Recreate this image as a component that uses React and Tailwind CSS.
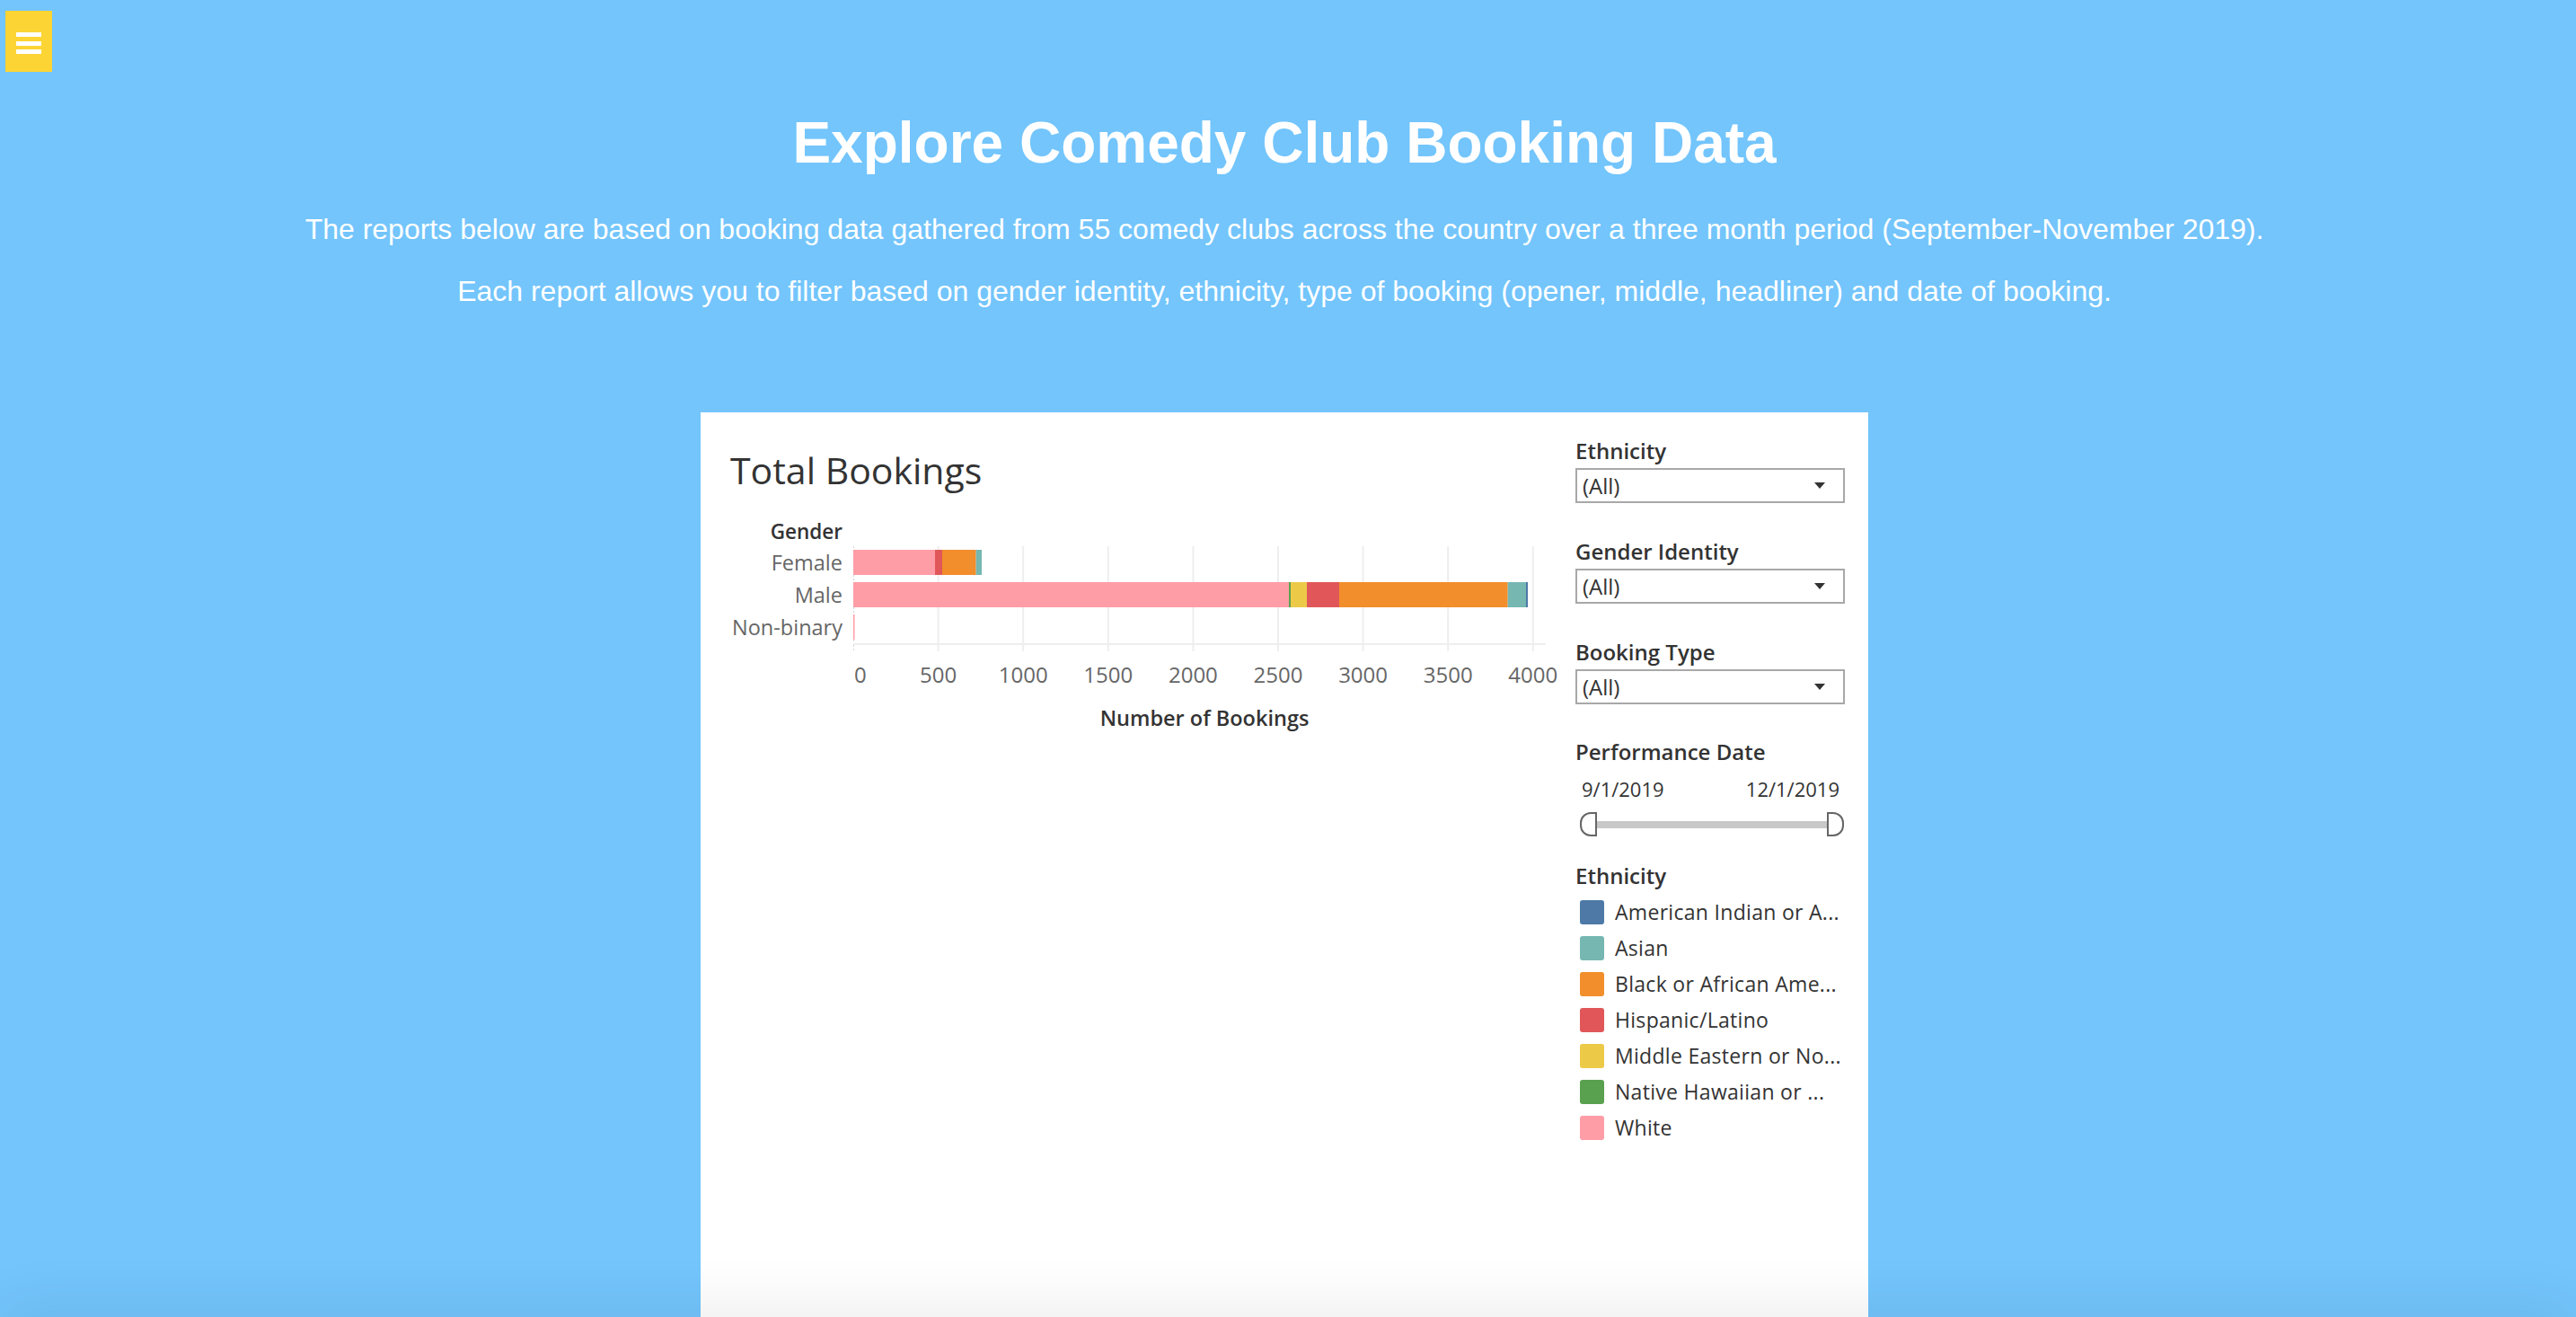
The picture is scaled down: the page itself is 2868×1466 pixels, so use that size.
import React from 'react';

const STEP = 94.6;

const bars = [
  {
    label: 'Female',
    segs: [
      [91, '#ff9da7'],
      [8, '#e15759'],
      [37.7, '#f28e2b'],
      [6.3, '#76b7b2'],
    ],
  },
  {
    label: 'Male',
    segs: [
      [485, '#ff9da7'],
      [2, '#59a14f'],
      [18, '#edc948'],
      [36, '#e15759'],
      [187.7, '#f28e2b'],
      [20.3, '#76b7b2'],
      [2, '#4e79a7'],
    ],
  },
  {
    label: 'Non-binary',
    segs: [[1.5, '#ff9da7']],
  },
];

const legend = [
  ['American Indian or A...', '#4e79a7'],
  ['Asian', '#76b7b2'],
  ['Black or African Ame...', '#f28e2b'],
  ['Hispanic/Latino', '#e15759'],
  ['Middle Eastern or No...', '#edc948'],
  ['Native Hawaiian or ...', '#59a14f'],
  ['White', '#ff9da7'],
];

const Filter = ({ label, first }) => (
  <div className={first ? '' : 'mt-[42px]'}>
    <p className="text-[24px] leading-[24px] font-semibold text-[#333]">{label}</p>
    <div className="mt-[7px] h-[39px] w-[300px] border-2 border-[#a8a8a8] flex items-center justify-between pl-[6px] pr-[20px]">
      <span className="text-[24px] leading-[24px] text-[#333]">(All)</span>
      <span className="w-0 h-0 border-l-[6px] border-r-[6px] border-t-[7px] border-l-transparent border-r-transparent border-t-[#333]" />
    </div>
  </div>
);

const Chart = () => {
  let rows = bars.map((b, i) => {
    let x = 0;
    return (
      <g key={b.label}>
        {b.segs.map(([w, c], j) => {
          const r = <rect key={j} x={x} y={4 + 36 * i} width={w} height={28} fill={c} />;
          x += w;
          return r;
        })}
      </g>
    );
  });

  return (
    <svg width="781" height="212" className="overflow-visible font-['Open_Sans']">
      {[1, 2, 3, 4, 5, 6, 7, 8].map((k) => (
        <line key={k} x1={STEP * k} x2={STEP * k} y1={0} y2={117} stroke="#eeeeee" strokeWidth="2" />
      ))}
      <line x1={0} x2={771} y1={109} y2={109} stroke="#eeeeee" strokeWidth="2" />
      <line x1={0.5} x2={0.5} y1={0} y2={108} stroke="#d4d4d4" strokeWidth="1" strokeDasharray="2 2" />
      <line x1={0.5} x2={0.5} y1={110} y2={117} stroke="#d4d4d4" strokeWidth="1" strokeDasharray="2 2" />
      {rows}
      {[0, 500, 1000, 1500, 2000, 2500, 3000, 3500, 4000].map((v, k) => (
        <text
          key={v}
          x={k === 0 ? 1 : STEP * k}
          y={151.5}
          textAnchor={k === 0 ? 'start' : 'middle'}
          fontSize="24"
          fill="#666"
        >
          {v}
        </text>
      ))}
      <text x={391} y={200} textAnchor="middle" fontSize="23.5" fontWeight="600" fill="#333">
        Number of Bookings
      </text>
    </svg>
  );
};

export default function App() {
  return (
    <div className="relative h-screen overflow-hidden bg-[#73c5fc] font-['Liberation_Sans',Arial,sans-serif]">
      <button className="absolute left-[6px] top-[12px] z-10 w-[52px] h-[68px] bg-[#fcd434] flex flex-col items-center pt-[24px] gap-[4.5px]">
        <span className="block w-[28px] h-[5px] bg-white" />
        <span className="block w-[28px] h-[5px] bg-white" />
        <span className="block w-[28px] h-[5px] bg-white" />
      </button>

      <div className="flex flex-col items-center pr-[8px] text-white">
        <h1 className="mt-[127px] text-[64px] leading-[64px] font-bold">Explore Comedy Club Booking Data</h1>
        <p className="mt-[48px] text-[32px] leading-[32px]">
          The reports below are based on booking data gathered from 55 comedy clubs across the country over a three month period (September-November 2019).
        </p>
        <p className="mt-[37px] text-[32px] leading-[32px]">
          Each report allows you to filter based on gender identity, ethnicity, type of booking (opener, middle, headliner) and date of booking.
        </p>

        <div className="mt-[119px] w-[1300px] h-[1100px] bg-white flex font-['Open_Sans',sans-serif]">
          <div className="w-[974px] pl-[33px]">
            <h2 className="mt-[44px] text-[41px] leading-[41px] text-[#333]">Total Bookings</h2>
            <div className="mt-[37px] flex">
              <div className="w-[125px] flex flex-col items-end">
                <p className="text-[22.5px] leading-[22px] font-semibold text-[#333]">Gender</p>
                <div className="mt-[5px] flex flex-col items-end">
                  {bars.map((b) => (
                    <div
                      key={b.label}
                      className="h-[36px] flex items-center whitespace-nowrap text-[23.5px] leading-[24px] text-[#666]"
                    >
                      {b.label}
                    </div>
                  ))}
                </div>
              </div>
              <div className="ml-[12px] pt-[27px]">
                <Chart />
              </div>
            </div>
          </div>

          <div className="w-[300px] pt-[31px] text-[#333]">
            <Filter label="Ethnicity" first />
            <Filter label="Gender Identity" />
            <Filter label="Booking Type" />

            <p className="mt-[41px] text-[24px] leading-[24px] font-semibold">Performance Date</p>
            <div className="mt-[18px] flex justify-between pl-[7px] pr-[6px] text-[22px] leading-[22px]">
              <span>9/1/2019</span>
              <span>12/1/2019</span>
            </div>
            <div className="mt-[15px] pl-[5px] pr-[1px] flex items-center">
              <span className="block w-[19px] h-[27px] border-2 border-[#666] rounded-l-[12px] bg-white" />
              <span className="block flex-1 h-[8px] bg-[#c8c8c8]" />
              <span className="block w-[19px] h-[27px] border-2 border-[#666] rounded-r-[12px] bg-white" />
            </div>

            <p className="mt-[32px] text-[24px] leading-[24px] font-semibold">Ethnicity</p>
            <div className="mt-[8px] pl-[5px]">
              {legend.map(([name, color]) => (
                <div key={name} className="h-[40px] flex items-center gap-[12px]">
                  <span className="block w-[27px] h-[27px] rounded-[3px]" style={{ backgroundColor: color }} />
                  <span className="text-[23px] leading-[23px] tracking-[0.3px] whitespace-nowrap">{name}</span>
                </div>
              ))}
            </div>
          </div>
        </div>
      </div>

      <div className="absolute left-0 right-0 top-full h-[40px] shadow-[0_0_70px_rgba(0,0,0,0.12)] z-20" />
    </div>
  );
}
